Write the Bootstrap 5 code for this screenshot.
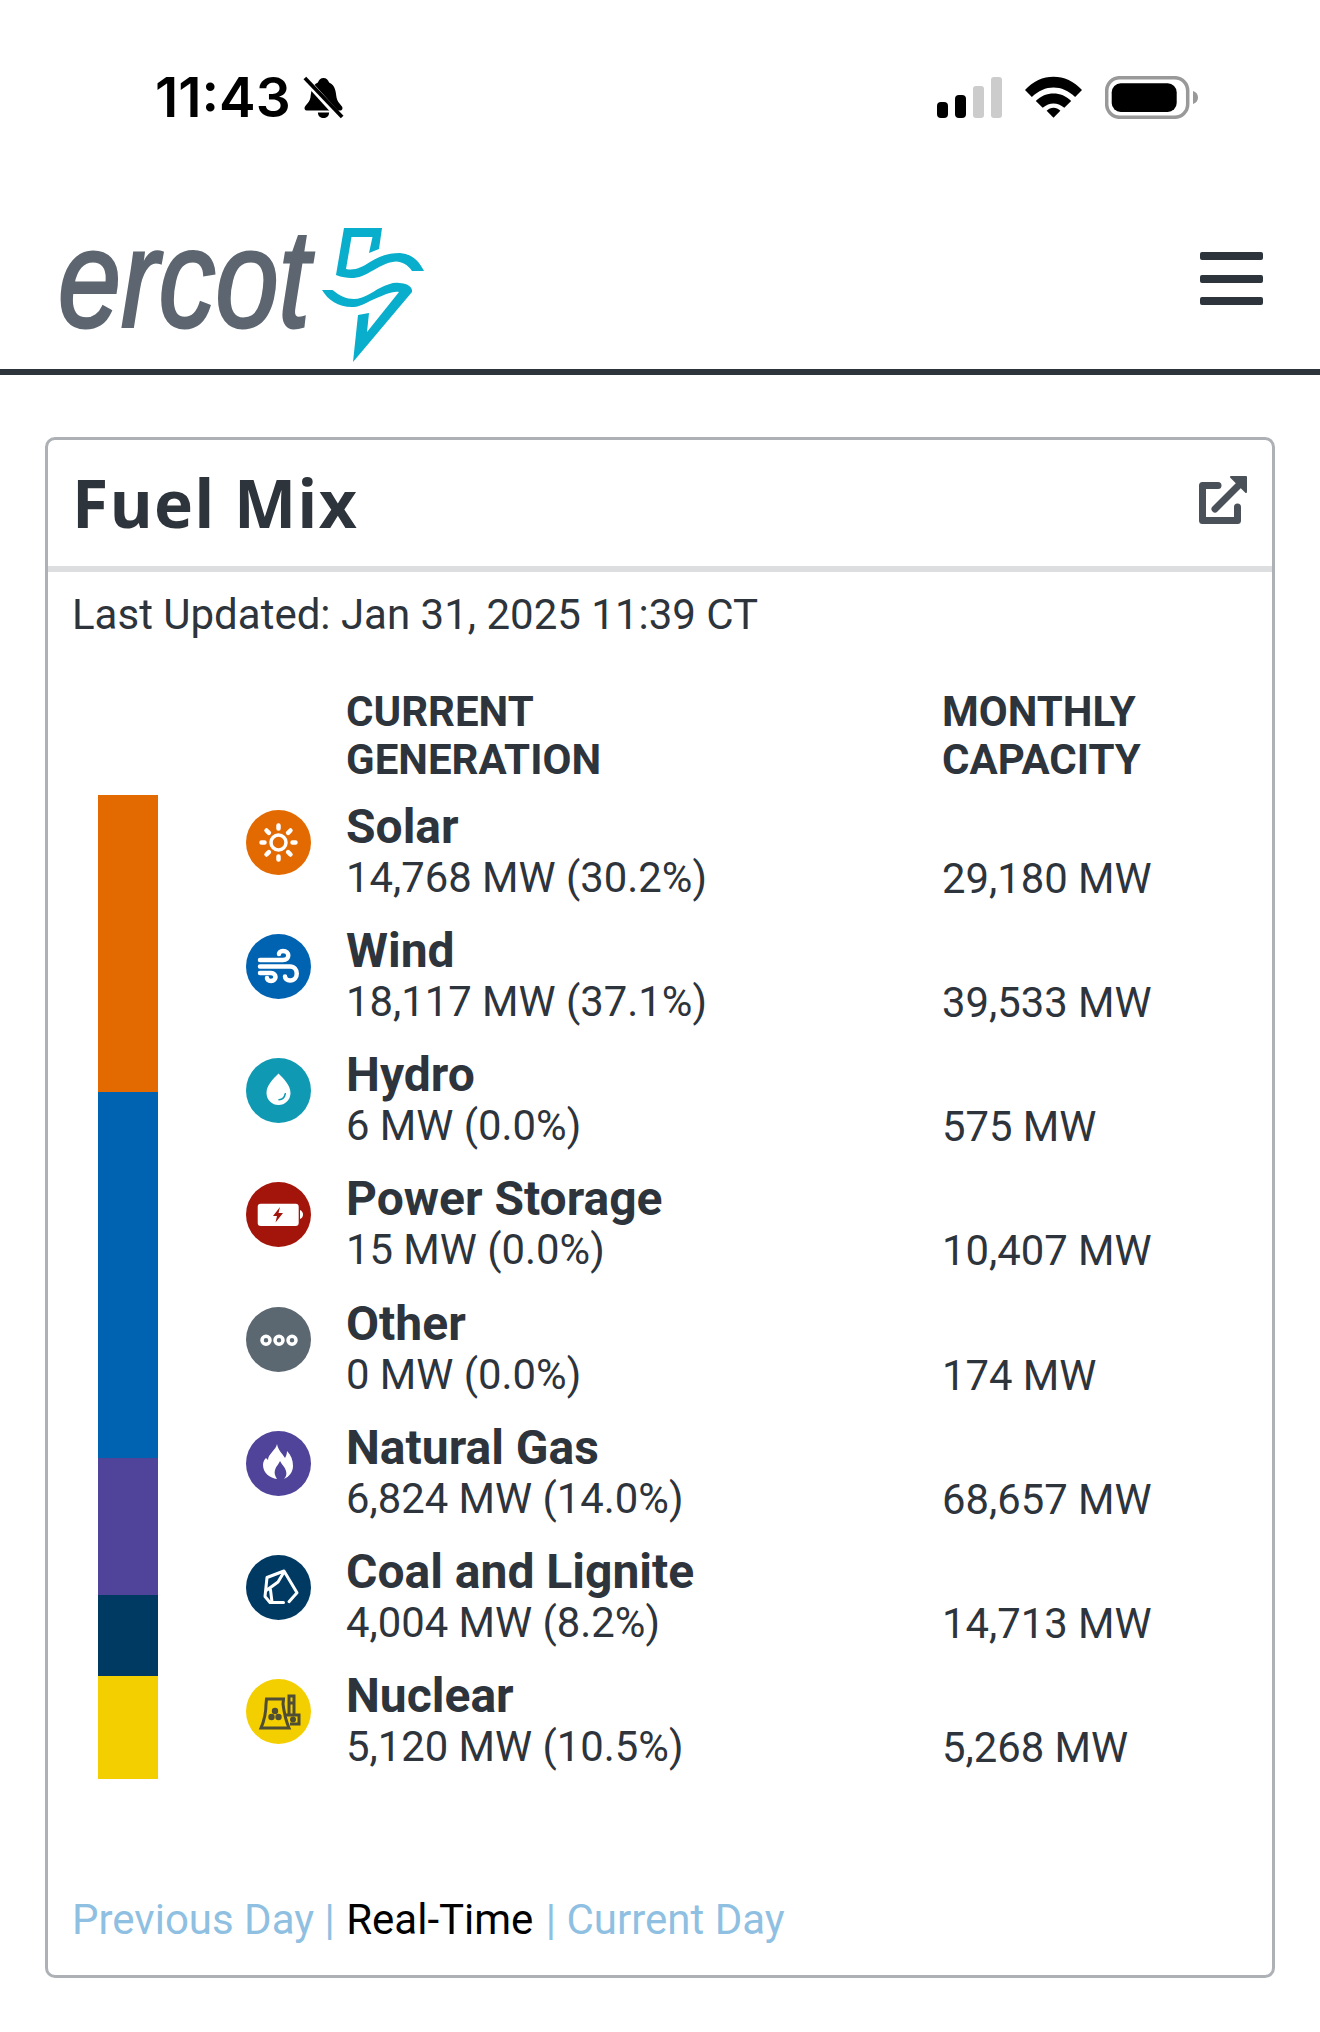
<!DOCTYPE html>
<html lang="en">
<head>
  <meta charset="UTF-8">
  <title>Fuel Mix</title>
  <link href="https://cdn.jsdelivr.net/npm/bootstrap@5.3.2/dist/css/bootstrap.min.css" rel="stylesheet">
  <style>
    body {
      font-family: Roboto, "Liberation Sans", sans-serif;
      color: #2e343b;
      background: #fff;
    }
    .status-row {
      height: 162px;
      padding: 32px 122px 0 155px;
    }
    .status-time {
      font-family: Inter, Roboto, sans-serif;
      font-size: 55px;
      font-weight: 600;
      line-height: 1;
      color: #000;
    }
    .status-icons { gap: 23px; }
    .bell-icon { margin-left: 12px; }
    .brand-bar {
      height: 213px;
      padding: 26px 57px 0 58px;
      border-bottom: 6px solid #2e343b;
    }
    .brand-word {
      font-family: "Liberation Sans", Roboto, sans-serif;
      font-style: italic;
      font-size: 140px;
      line-height: 1;
      color: #5d6670;
      -webkit-text-stroke: 3px #5d6670;
      transform: scaleX(.81);
      transform-origin: left center;
      width: 264px;
    }
    .brand-bolt { margin-top: 33px; }
    .menu-bars span {
      display: block;
      width: 63px;
      height: 8px;
      background: #2e343b;
      border-radius: 2px;
      margin: 14.5px 0;
    }
    .mix-card {
      margin: 62px 45px 0;
      border: 3px solid #adb1b6;
      border-radius: 10px;
      height: 1541px;
    }
    .mix-head {
      height: 132px;
      padding: 0 24px;
      border-bottom: 6px solid #dcdee0;
    }
    .mix-title {
      font-family: "Open Sans", sans-serif;
      font-size: 66px;
      font-weight: 700;
      letter-spacing: 1.2px;
      color: #2e343b;
      margin: 0;
    }
    .export-icon { margin-bottom: 6px; }
    .mix-updated {
      font-size: 42px;
      line-height: 1;
      padding: 22px 0 0 24px;
      height: 115px;
    }
    .mix-body { padding-left: 50px; }
    .stack-col {
      width: 60px;
      margin-top: 108px;
    }
    .stack-col div { width: 60px; }
    .icon-col { width: 65px; margin-left: 88px; }
    .name-col { width: 596px; margin-left: 35px; }
    .cap-col { width: 300px; }
    .col-label {
      font-size: 42px;
      font-weight: 700;
      line-height: 48px;
      height: 96px;
      padding-top: 1px;
      text-transform: uppercase;
    }
    .fuel-row { height: 124.17px; }
    .fuel-name {
      font-size: 48px;
      font-weight: 700;
      line-height: 52px;
      padding-top: 18px;
    }
    .fuel-val {
      font-size: 41.8px;
      line-height: 50px;
    }
    .cap-val {
      font-size: 41.8px;
      line-height: 50px;
      padding-top: 71px;
    }
    .icon-slot {
      height: 124.17px;
      padding-top: 27px;
    }
    .icon-slot svg { display: block; }
    .range-links {
      font-size: 42px;
      line-height: 1;
      padding-left: 24px;
      color: #8fc0e2;
      margin-top: 120px;
    }
    .range-links a { color: #8fc0e2; text-decoration: none; }
    .range-links b { font-weight: 400; color: #000; margin: 0 2px 0 1px; }
  </style>
</head>
<body>
  <div class="status-row d-flex justify-content-between align-items-center">
    <div class="d-flex align-items-center">
      <span class="status-time">11:43</span>
      <svg class="bell-icon" width="41" height="45" viewBox="0 0 44 46">
        <path d="M22 2c3 0 5 2 6 5 7 3 7 10 8 16 1 5 4 7 6 10 1 2 0 4-2 4H4c-2 0-3-2-2-4 2-3 5-5 6-10 1-6 1-13 8-16 1-3 3-5 6-5z" fill="#000"/>
        <path d="M16 39h12c0 4-3 6-6 6s-6-2-6-6z" fill="#000"/>
        <path d="M2 3l38 42" stroke="#fff" stroke-width="7"/>
        <path d="M2 2l40 42" stroke="#000" stroke-width="4"/>
      </svg>
    </div>
    <div class="status-icons d-flex align-items-center">
      <svg width="65" height="41" viewBox="0 0 65 41">
        <rect x="0" y="25" width="11" height="16" rx="4" fill="#000"/>
        <rect x="18" y="18" width="11" height="23" rx="4" fill="#000"/>
        <rect x="36" y="9" width="11" height="32" rx="3" fill="#ccc"/>
        <rect x="54" y="0" width="11" height="41" rx="3" fill="#ccc"/>
      </svg>
      <svg width="57" height="42" viewBox="0 0 58 42">
        <path d="M0 14C16-4 42-4 58 14l-7 7C38 8 20 8 7 21z" fill="#000"/>
        <path d="M11 25c10-10 26-10 36 0l-7 7c-7-6-15-6-22 0z" fill="#000"/>
        <path d="M22 35c4-4 10-4 14 0l-7 7z" fill="#000"/>
      </svg>
      <svg width="93" height="43" viewBox="0 0 93 43">
        <rect x="1.7" y="1.7" width="81" height="39.6" rx="13" fill="none" stroke="#999" stroke-width="3.5"/>
        <rect x="6.7" y="7.3" width="65" height="28.7" rx="9" fill="#000"/>
        <path d="M88 15c3 1 5 3 5 6.500s-2 5.500-5 6.500z" fill="#999"/>
      </svg>
    </div>
  </div>

  <nav class="brand-bar d-flex justify-content-between align-items-center">
    <div class="d-flex align-items-center">
      <span class="brand-word">ercot</span>
      <svg class="brand-bolt" width="103" height="134" viewBox="0 0 103 134">
        <path d="M22 0H60L57 21L47 25L50.500 9H29.500L24 41C33 43 40 39 48 34C58 28 66 25 78 25C90 26 97 33 102 43H90C86 37 80 33.500 74 33.500C64 34 56 40 48 44C40 49 30 53 14 47Z" fill="#08aecb"/>
        <path d="M0 62H10.500C18 68 24 71 32 71C42 71 50 64 58 60C66 56 72 54 77 55C85 55 91 59 90 64L31 134L36 87L47 85L45 104L77 64C70 63 62 67 48 73C40 77 36 79 30 79C16 79 6 72 0 62Z" fill="#08aecb"/>
      </svg>
    </div>
    <div class="menu-bars"><span></span><span></span><span></span></div>
  </nav>

  <div class="mix-card">
    <div class="mix-head d-flex justify-content-between align-items-center">
      <h2 class="mix-title">Fuel Mix</h2>
      <svg class="export-icon" width="49" height="50" viewBox="0 0 49 50">
        <path d="M19 10.500H3.500V45.500H38.500V32" fill="none" stroke="#4a5158" stroke-width="7" stroke-linecap="round" stroke-linejoin="round"/>
        <path d="M16 34L40 10" fill="none" stroke="#4a5158" stroke-width="7" stroke-linecap="round"/>
        <path d="M32 2H47V17Z" fill="#4a5158" stroke="#4a5158" stroke-width="2" stroke-linejoin="round"/>
      </svg>
    </div>
    <div class="mix-updated">Last Updated: Jan 31, 2025 11:39 CT</div>
    <div class="mix-body d-flex">
      <div class="stack-col">
        <div style="height:297px;background:#e36a00"></div>
        <div style="height:366px;background:#0063b2"></div>
        <div style="height:137px;background:#50439a"></div>
        <div style="height:81px;background:#003a63"></div>
        <div style="height:103px;background:#f4cf00"></div>
      </div>
      <div class="icon-col">
        <div style="height:96px"></div>
        <div class="icon-slot">
          <svg width="65" height="65" viewBox="0 0 65 65">
            <circle cx="32.500" cy="32.500" r="32.500" fill="#e36a00"/>
            <circle cx="32.500" cy="32.500" r="7.500" fill="none" stroke="#fff" stroke-width="3.500"/>
            <path d="M32.500 15.500v3M32.500 46.500v3M15.500 32.500h3M46.500 32.500h3M20.500 20.500l2.400 2.400M42.100 42.100l2.400 2.400M44.500 20.500l-2.400 2.400M22.900 42.100l-2.400 2.400" stroke="#fff" stroke-width="4.500" stroke-linecap="round"/>
          </svg>
        </div>
        <div class="icon-slot">
          <svg width="65" height="65" viewBox="0 0 65 65">
            <circle cx="32.500" cy="32.500" r="32.500" fill="#0063b2"/>
            <path d="M14 26h23c7 0 7-9 0-9-3 0-4 2-4 3M14 32.500h30c9 0 9 14 0 14-3 0-5-2-5-4M14 39h11c6 0 6 8 0 8-3 0-4-2-4-3" fill="none" stroke="#fff" stroke-width="4.500" stroke-linecap="round"/>
          </svg>
        </div>
        <div class="icon-slot">
          <svg width="65" height="65" viewBox="0 0 65 65">
            <circle cx="32.500" cy="32.500" r="32.500" fill="#0f99b3"/>
            <path d="M32.500 15.500c5 5 12 11.500 12 19.500a12 12 0 0 1-24 0c0-8 7-14.500 12-19.500z" fill="#fff"/>
            <path d="M33 41.700c3 0 5.500-2 6.300-6" fill="none" stroke="#0f99b3" stroke-width="1.600" stroke-linecap="round"/>
          </svg>
        </div>
        <div class="icon-slot">
          <svg width="65" height="65" viewBox="0 0 65 65">
            <circle cx="32.500" cy="32.500" r="32.500" fill="#a3140a"/>
            <rect x="11.700" y="21.700" width="41" height="22.300" rx="3" fill="#fff"/>
            <path d="M54 28c2 1 3 2.500 3 4.500s-1 3.500-3 4.500z" fill="#fff"/>
            <path d="M34 25L27 34H31L29.500 40.500L37 31H32.500Z" fill="#a3140a"/>
          </svg>
        </div>
        <div class="icon-slot">
          <svg width="65" height="65" viewBox="0 0 65 65">
            <circle cx="32.500" cy="32.500" r="32.500" fill="#5b6771"/>
            <g fill="none" stroke="#fff" stroke-width="3.500">
              <circle cx="20" cy="33.300" r="4"/>
              <circle cx="33" cy="33.300" r="4"/>
              <circle cx="46" cy="33.300" r="4"/>
            </g>
          </svg>
        </div>
        <div class="icon-slot">
          <svg width="65" height="65" viewBox="0 0 65 65">
            <circle cx="32.500" cy="32.500" r="32.500" fill="#50439a"/>
            <path d="M31 13c1 6 5 9 8 14 1-2 2-4 2-7 4 4 6 9 6 15 0 6-4 11-9 13 2-2 3-5 2-8-1-4-4-6-6-10-1 3-4 5-5 9-1 3 0 6 2 9-7-1-14-6-14-14 0-3 1-5 3-7l2 2c0-6 8-10 9-16z" fill="#fff"/>
          </svg>
        </div>
        <div class="icon-slot">
          <svg width="65" height="65" viewBox="0 0 65 65">
            <circle cx="32.500" cy="32.500" r="32.500" fill="#003a63"/>
            <path d="M37.500 47.500H24l-5-6 2-19 17-6.500 13 21.700-8 9M21 35l11-8 6-10M24.500 35l1.500 12" fill="none" stroke="#fff" stroke-width="3" stroke-linecap="round" stroke-linejoin="round"/>
          </svg>
        </div>
        <div class="icon-slot">
          <svg width="65" height="65" viewBox="0 0 65 65">
            <circle cx="32.500" cy="32.500" r="32.500" fill="#f4cf00"/>
            <g fill="none" stroke="#4f4d33" stroke-width="3">
              <path d="M20.500 20H37.500L37 25c1 8 3 17 6 24H15c3-7 5-16 5-24z"/>
              <path d="M43 36V17h5v19M43 24h5M40 36h13v9H44"/>
              <circle cx="47" cy="40.500" r="1.500"/>
            </g>
            <g fill="#4f4d33">
              <circle cx="29" cy="32" r="3.200"/>
              <circle cx="25.500" cy="38" r="3.200"/>
              <circle cx="32.500" cy="38" r="3.200"/>
            </g>
          </svg>
        </div>
      </div>
      <div class="name-col">
        <div class="col-label">Current<br>Generation</div>
        <div class="fuel-row"><div class="fuel-name">Solar</div><div class="fuel-val">14,768 MW (30.2%)</div></div>
        <div class="fuel-row"><div class="fuel-name">Wind</div><div class="fuel-val">18,117 MW (37.1%)</div></div>
        <div class="fuel-row"><div class="fuel-name">Hydro</div><div class="fuel-val">6 MW (0.0%)</div></div>
        <div class="fuel-row"><div class="fuel-name">Power Storage</div><div class="fuel-val">15 MW (0.0%)</div></div>
        <div class="fuel-row"><div class="fuel-name">Other</div><div class="fuel-val">0 MW (0.0%)</div></div>
        <div class="fuel-row"><div class="fuel-name">Natural Gas</div><div class="fuel-val">6,824 MW (14.0%)</div></div>
        <div class="fuel-row"><div class="fuel-name">Coal and Lignite</div><div class="fuel-val">4,004 MW (8.2%)</div></div>
        <div class="fuel-row"><div class="fuel-name">Nuclear</div><div class="fuel-val">5,120 MW (10.5%)</div></div>
      </div>
      <div class="cap-col">
        <div class="col-label">Monthly<br>Capacity</div>
        <div class="fuel-row cap-val">29,180 MW</div>
        <div class="fuel-row cap-val">39,533 MW</div>
        <div class="fuel-row cap-val">575 MW</div>
        <div class="fuel-row cap-val">10,407 MW</div>
        <div class="fuel-row cap-val">174 MW</div>
        <div class="fuel-row cap-val">68,657 MW</div>
        <div class="fuel-row cap-val">14,713 MW</div>
        <div class="fuel-row cap-val">5,268 MW</div>
      </div>
    </div>
    <div class="range-links"><a href="#">Previous Day</a> | <b>Real-Time</b> | <a href="#">Current Day</a></div>
  </div>
  <script src="https://cdn.jsdelivr.net/npm/bootstrap@5.3.2/dist/js/bootstrap.bundle.min.js"></script>
</body>
</html>
